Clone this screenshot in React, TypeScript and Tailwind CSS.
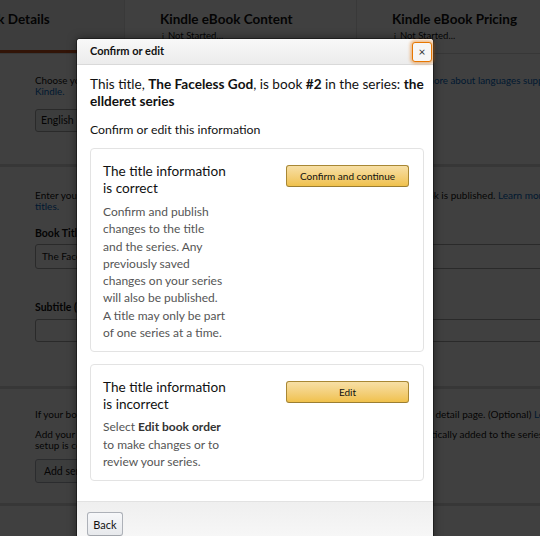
import React from "react";

function Tab({ title, active, w }: { title: string; active?: boolean; w: string }) {
  return (
    <div
      className={
        "shrink-0 pl-[35px] pt-[10px] h-[53px] border-r border-[#e4e4e4] " +
        w +
        " " +
        (active ? "bg-[#f3f3f3] border-b-[3px] border-b-[#c7511f]" : "bg-white")
      }
    >
      <div className="text-[13.5px] font-bold text-[#111] leading-[18px] whitespace-nowrap">{title}</div>
      {!active && (
        <div className="flex items-center gap-[4px] text-[9.5px] text-[#111] leading-[12px] mt-[2px] pl-[2px]">
          <span className="text-[8px]">i</span>
          <span>Not Started...</span>
        </div>
      )}
    </div>
  );
}

function Section({ children, h }: { children: React.ReactNode; h: string }) {
  return (
    <div className={"flex border-b-[3px] border-[#dcdcdc] bg-white " + h}>
      <div className="w-[97px] shrink-0" />
      <div className="w-[760px] shrink-0 text-[10px] leading-[11px] text-[#111]">{children}</div>
    </div>
  );
}

function YellowButton({ children }: { children: React.ReactNode }) {
  return (
    <button className="w-[123px] h-[22px] mt-[2px] shrink-0 rounded-[3px] border border-[#a88734] border-b-[#9c7e31] bg-gradient-to-b from-[#f7dfa5] to-[#f0c14b] text-[10px] leading-none text-[#111]">
      {children}
    </button>
  );
}

export default function App() {
  return (
    <div className="relative w-[540px] h-[536px] overflow-hidden bg-white font-['Lato','Noto_Sans',sans-serif]">
      {/* page underneath */}
      <div className="-ml-[62px] w-[1000px]">
        <div className="flex border-b border-[#dcdcdc]">
          <Tab title="Book Details" active w="w-[187px]" />
          <Tab title="Kindle eBook Content" w="w-[232px]" />
          <Tab title="Kindle eBook Pricing" w="w-[232px]" />
        </div>
        <Section h="h-[113px]">
          <p className="pt-[21px] whitespace-nowrap text-[9.8px]">
            Choose your eBook's primary language (the language in which the book was written).{" "}
            <span className="text-[#0066c0]">Learn more about languages supported on</span>
            <br />
            <span className="text-[#0066c0]">Kindle.</span>
          </p>
          <div className="mt-[12px] w-[200px] h-[23px] border border-[#a6a6a6] rounded-[3px] bg-[#f0f2f2] pl-[5px] flex items-center text-[10.5px]">
            English
          </div>
        </Section>
        <Section h="h-[222px]">
          <p className="pt-[23px] whitespace-nowrap">
            Enter your title as it appears on the book cover. This field cannot be changed after your book is
            published. <span className="text-[#0066c0]">Learn more about</span>
            <br />
            <span className="text-[#0066c0]">titles.</span>
          </p>
          <div className="mt-[16px] font-bold text-[10.5px]">Book Title</div>
          <div className="mt-[5px] w-[700px] h-[25px] border border-[#a6a6a6] rounded-[3px] pl-[6px] flex items-center">
            The Faceless God
          </div>
          <div className="mt-[33px] font-bold text-[10.5px]">Subtitle (Optional)</div>
          <div className="mt-[6px] w-[700px] h-[23px] border border-[#a6a6a6] rounded-[3px]" />
        </Section>
        <Section h="h-[117px]">
          <p className="pt-[20px] whitespace-nowrap">
            If your book is part of a series, add series details so readers can easily find it on the Amazon detail
            page. (Optional) <span className="text-[#0066c0]">Learn more</span>
          </p>
          <p className="pt-[9px] whitespace-nowrap">
            Add your book to an existing series or create a new one. Books in the series will be automatically added
            to the series once
            <br />
            setup is complete.
          </p>
          <div className="mt-[8px] inline-flex items-center h-[24px] px-[8px] border border-[#adb1b8] rounded-[3px] bg-[#f0f1f3] text-[10.5px]">
            Add series details
          </div>
        </Section>
        <div className="h-[60px] bg-white" />
      </div>

      {/* backdrop */}
      <div className="absolute inset-0 bg-black/75" />

      {/* modal */}
      <div className="absolute left-[77px] top-[39px] w-[356px] bg-white rounded-t-[3px] shadow-[0_0_0_1px_rgba(0,0,0,0.35),0_0_10px_rgba(0,0,0,0.5)] text-[#111]">
        <div className="h-[26px] flex items-center justify-between pl-[13px] pr-[1px] bg-gradient-to-b from-[#f8f8f8] to-[#ececec] border-b border-[#d9d9d9] rounded-t-[3px]">
          <span className="text-[11px] font-bold">Confirm or edit</span>
          <button className="w-[20px] h-[20px] flex items-center justify-center rounded-[3px] border border-[#e77600] shadow-[0_0_3px_2px_rgba(228,121,17,0.45)] bg-[#f6f6f6] text-[12px] leading-none text-[#333]">
            ×
          </button>
        </div>
        <div className="pl-[13px] pr-[9px] pt-[11px] pb-[20px]">
          <p className="text-[13.6px] leading-[17px]">
            This title, <b>The Faceless God</b>, is book <b>#2</b> in the series: <b>the ellderet series</b>
          </p>
          <p className="mt-[11px] text-[12.3px] leading-[17px]">Confirm or edit this information</p>
          <div className="mt-[10px] border border-[#e3e3e3] rounded-[4px] pl-[12px] pr-[14px] pt-[14px] pb-[10px] flex justify-between">
            <div className="w-[123px]">
              <div className="text-[13.6px] leading-[17px]">The title information is correct</div>
              <div className="mt-[6px] text-[12px] leading-[17.3px] text-[#555]">
                Confirm and publish changes to the title and the series. Any previously saved changes on your series will
                also be published. A title may only be part of one series at a time.
              </div>
            </div>
            <YellowButton>Confirm and continue</YellowButton>
          </div>
          <div className="mt-[12px] border border-[#e3e3e3] rounded-[4px] pl-[12px] pr-[14px] pt-[14px] pb-[10px] flex justify-between">
            <div className="w-[123px]">
              <div className="text-[13.6px] leading-[17px]">The title information is incorrect</div>
              <div className="mt-[5px] text-[12px] leading-[17.3px] text-[#555]">
                Select <b className="text-[#333]">Edit book order</b> to make changes or to review your series.
              </div>
            </div>
            <YellowButton>Edit</YellowButton>
          </div>
        </div>
        <div className="h-[50px] border-t border-[#e2e2e2] bg-gradient-to-b from-[#efefef] to-[#fafafa] pl-[10px] pt-[10px] flex items-start">
          <button className="h-[24px] w-[36px] rounded-[3px] border border-[#adb1b8] border-b-[#a2a6ac] bg-gradient-to-b from-[#f7f8fa] to-[#e7e9ec] text-[11px] leading-none text-[#111]">
            Back
          </button>
        </div>
      </div>
    </div>
  );
}
